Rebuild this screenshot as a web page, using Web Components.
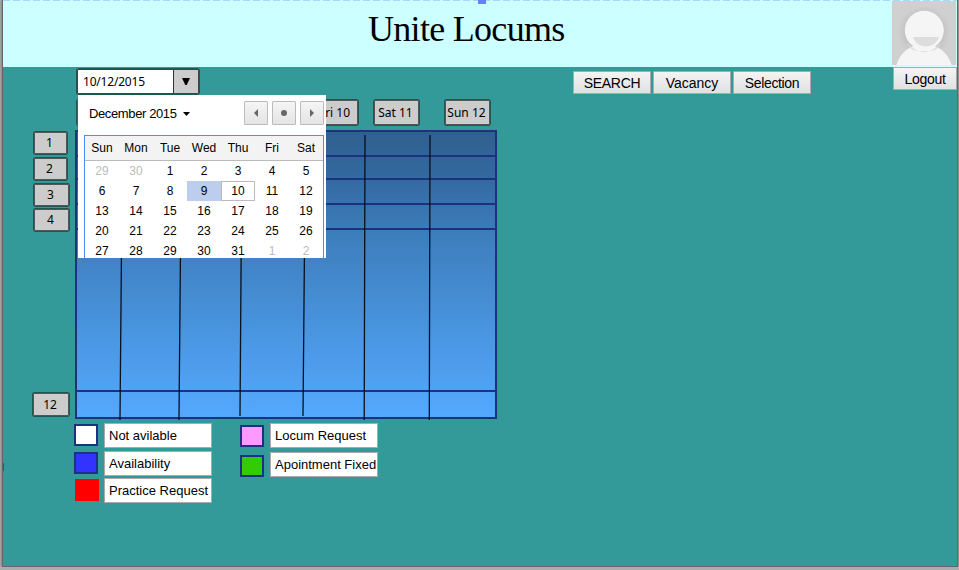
<!DOCTYPE html>
<html lang="en">
<head>
<meta charset="utf-8">
<title>Unite Locums</title>
<style>
body{margin:0;background:#acacac;overflow:hidden}
</style>
</head>
<body>
<locum-app></locum-app>
<script>
function define(name, html){
  const t=document.createElement('template');
  t.innerHTML=html;
  customElements.define(name, class extends HTMLElement{
    constructor(){
      super();
      this.attachShadow({mode:'open'}).appendChild(t.content.cloneNode(true));
    }
  });
}

define('push-button', `<style>
:host{display:flex;flex:none;box-sizing:border-box;width:78px;height:23px;align-items:center;justify-content:center;border:1px solid #aaa;background:linear-gradient(#f4f4f4,#e1e1e1);font:14px "Liberation Sans",sans-serif;letter-spacing:-.3px;color:#000;padding-top:1px}
</style><slot></slot>`);

define('tag-box', `<style>
:host{display:flex;flex:none;box-sizing:border-box;width:47px;height:27px;align-items:center;justify-content:center;border:1px solid #1f5755;box-shadow:inset 0 0 0 1px #555;border-radius:2px;background:#ccc;font:12px "Noto Sans",sans-serif;white-space:nowrap;color:#000;padding:0 2px 1px 0}
</style><slot></slot>`);

define('date-field', `<style>
:host{display:flex;flex:none;box-sizing:border-box;width:124px;height:27px;border:1px solid #1f5755;box-shadow:inset 0 0 0 1px #444;border-radius:2px;background:#fff;font:12px "Noto Sans",sans-serif;color:#000}
.v{flex:1;display:flex;align-items:center;padding-left:6px;letter-spacing:-.2px}
.a{width:24px;margin:1px 1px 1px 0;border-left:1px solid #333;background:#ccc;display:flex;align-items:center;justify-content:center}
</style><span class="v"><slot></slot></span><span class="a"><svg width="10" height="9"><path d="M1 1H9L5.7 8H4.3Z"/></svg></span>`);

define('user-avatar', `<style>:host,svg{display:block;width:64px;height:64px}</style>
<svg viewBox="0 0 64 64"><defs><radialGradient id="g"><stop offset=".7" stop-color="#b4b4b4"/><stop offset="1" stop-color="#d0d0d0"/></radialGradient></defs>
<rect width="64" height="64" fill="#d0d0d0"/><circle cx="32" cy="31" r="26" fill="url(#g)" opacity=".5"/>
<path d="M4.500 64C8 51 19 43 32 43S56 51 59.500 64Z" fill="#f5f5f5"/>
<path d="M15 42Q32 60 49 42Q46 49 39 50H25Q18 49 15 42Z" fill="#ddd"/>
<circle cx="32.300" cy="29.300" r="19.500" fill="#f5f5f5"/>
<path d="M21 36H47C45 42 40 45.500 34 45.500S23 42 21 36Z" fill="#ddd"/></svg>`);

define('page-header', `<style>
:host{display:grid;grid-template-columns:889px 64px;height:67px;background:#cff;position:relative;box-sizing:border-box;padding-top:1px}
:host::before{content:"";position:absolute;inset:0 0 auto;height:1px;background:repeating-linear-gradient(90deg,#a9d7ff 0 7px,#cff 7px 10px)}
.h{position:absolute;left:475px;top:0;width:8px;height:4px;background:#667fff}
h1{margin:6px 0 0 365px;font:36px/44px "Liberation Serif",serif;letter-spacing:-.7px;white-space:nowrap;color:#000;font-weight:normal}
</style><i class="h"></i><h1><slot></slot></h1><user-avatar></user-avatar>`);

define('schedule-grid', `<style>
:host{display:block;height:290px;width:422px}svg{display:block;overflow:visible}
</style><svg width="422" height="289" fill="none" stroke="#1b3281" stroke-width="2">
<defs><linearGradient id="b" x2="0" y2="1"><stop stop-color="#315f8f"/><stop offset=".15" stop-color="#33689f"/><stop offset=".38" stop-color="#3e7fbe"/><stop offset="1" stop-color="#54a9ff"/></linearGradient></defs>
<rect x="1" y="1" width="420" height="287" fill="url(#b)"/>
<path d="M0 26H422M0 49H422M0 74H422M0 99H422M0 261H422"/>
<g stroke="#06101c" stroke-width="1.300"><path d="M47.500 5L45 290M106.500 5L104 290M167 5L165 286M230.500 5L228 286M290 5L289.200 290M355 5L354.300 290"/></g>
</svg>`);

define('legend-item', `<style>
:host{display:flex;gap:6px;font:13px "Liberation Sans",sans-serif;color:#000;height:25px}
i{box-sizing:border-box;width:24px;height:22px;margin-top:var(--drop,1px);margin-left:var(--shift,0);margin-right:calc(0px - var(--shift,0px));border:2px solid var(--edge,#1b3281);background:var(--tone)}
span{box-sizing:border-box;width:108px;height:25px;border:1px solid #aaa;background:#fff;line-height:23px;padding-left:4px;white-space:nowrap;overflow:hidden}
</style><i></i><span><slot></slot></span>`);

const days=['Sun','Mon','Tue','Wed','Thu','Fri','Sat'];
const dates=[29,30,...Array.from({length:31},(_,i)=>i+1),1,2];
define('month-popup', `<style>
:host{display:block;box-sizing:border-box;width:248px;height:163px;overflow:hidden;background:#fff;font:12px "Liberation Sans",sans-serif;color:#000}
.top{display:flex;align-items:center;height:40px;padding:0 2px 0 11px;gap:4px;box-sizing:border-box;padding-bottom:4px}
b{font:13px "Liberation Sans",sans-serif;letter-spacing:-.38px}.top>svg{margin:1px auto 0 1px}
.n{box-sizing:border-box;width:24px;height:24px;border:1px solid #bbb;border-radius:1px;background:linear-gradient(#f5f5f5,#e4e4e4);display:flex}
.n svg{margin:auto}
.g{display:grid;grid-template-columns:repeat(7,34px);grid-template-rows:25px;grid-auto-rows:20px;border:1px solid #4d8ff0;width:238px;margin-left:6px;text-align:center;line-height:20px}
.d{background:#f3f3f3;border-bottom:1px solid #bbb;line-height:24px;box-sizing:border-box}
.o{color:#bbb}.s{background:#bccdee}.t{box-sizing:border-box;border:1px solid #bbb;line-height:18px}
</style><div class="top"><b>December 2015</b><svg width="9" height="6"><path d="M1 1H8L4.500 5Z"/></svg>
<span class="n"><svg width="10" height="10"><path d="M7 1V9L3 5Z" fill="#666"/></svg></span>
<span class="n"><svg width="10" height="10"><circle cx="5" cy="5" r="3" fill="#666"/></svg></span>
<span class="n"><svg width="10" height="10"><path d="M3 1V9L7 5Z" fill="#666"/></svg></span></div>
<div class="g">${days.map(d=>`<span class="d">${d}</span>`).join('')}${dates.map((n,i)=>`<span class="${i<2||i>32?'o':i===10?'s':i===11?'t':''}">${n}</span>`).join('')}</div>`);

define('locum-app', `<style>
:host{display:block;box-sizing:border-box;width:956px;height:567px;margin-left:2px;border:1px solid #666;border-width:0 1px 1px 1px;background:#399;position:relative;box-shadow:0 0 3px #666}
.bar{display:flex;height:32px;align-items:flex-start;padding-left:73px}
date-field{margin-top:1px;margin-right:373px}
.bar push-button{margin:4px 2px 0 0}
.bar .out{width:64px;margin:0 0 0 80px}
.days{display:flex;padding-left:73px;height:31px}
.mid{display:grid;grid-template-columns:72px 422px;height:293px}
.rows{padding-left:30px;padding-top:1px}
.rows tag-box{width:35px;height:24px;margin-bottom:2px}
.rows .w{width:37px}.rows .z{width:38px;height:25px;margin:160px 0 0 -1px}
.rows .q{height:24px;margin-bottom:1px}
.legend{display:flex;padding-left:71px;gap:28px}
.col{display:flex;flex-direction:column}
.col legend-item{margin-bottom:3px}.col .r{margin-top:-1px;--drop:1px;--edge:#f00;--shift:1px}
month-popup{position:absolute;left:75px;top:95px}
.nub{position:absolute;left:0;top:463px;width:1px;height:8px;background:#1c51b2}
</style>
<page-header>Unite Locums</page-header>
<div class="bar"><date-field>10/12/2015</date-field><push-button>SEARCH</push-button><push-button style="letter-spacing:0">Vacancy</push-button><push-button style="letter-spacing:-.35px">Selection</push-button><push-button class="out">Logout</push-button></div>
<div class="days"><tag-box></tag-box><tag-box style="margin:0 14px 0 189px">Fri 10</tag-box><tag-box style="margin-right:24px">Sat 11</tag-box><tag-box>Sun 12</tag-box></div>
<div class="mid"><div class="rows"><tag-box>1</tag-box><tag-box>2</tag-box><tag-box class="w q">3</tag-box><tag-box class="w" style="margin:0">4</tag-box><tag-box class="z">12</tag-box></div><schedule-grid></schedule-grid></div>
<div class="legend"><div class="col"><legend-item style="--tone:#fff">Not avilable</legend-item><legend-item style="--tone:#33f">Availability</legend-item><legend-item class="r" style="--tone:#f00">Practice Request</legend-item></div>
<div class="col"><legend-item style="--tone:#f9f;--drop:2px;margin-bottom:4px">Locum Request</legend-item><legend-item style="--tone:#3c0;--drop:3px">Apointment Fixed</legend-item></div></div>
<month-popup></month-popup><i class="nub"></i>`);
</script>
</body>
</html>
